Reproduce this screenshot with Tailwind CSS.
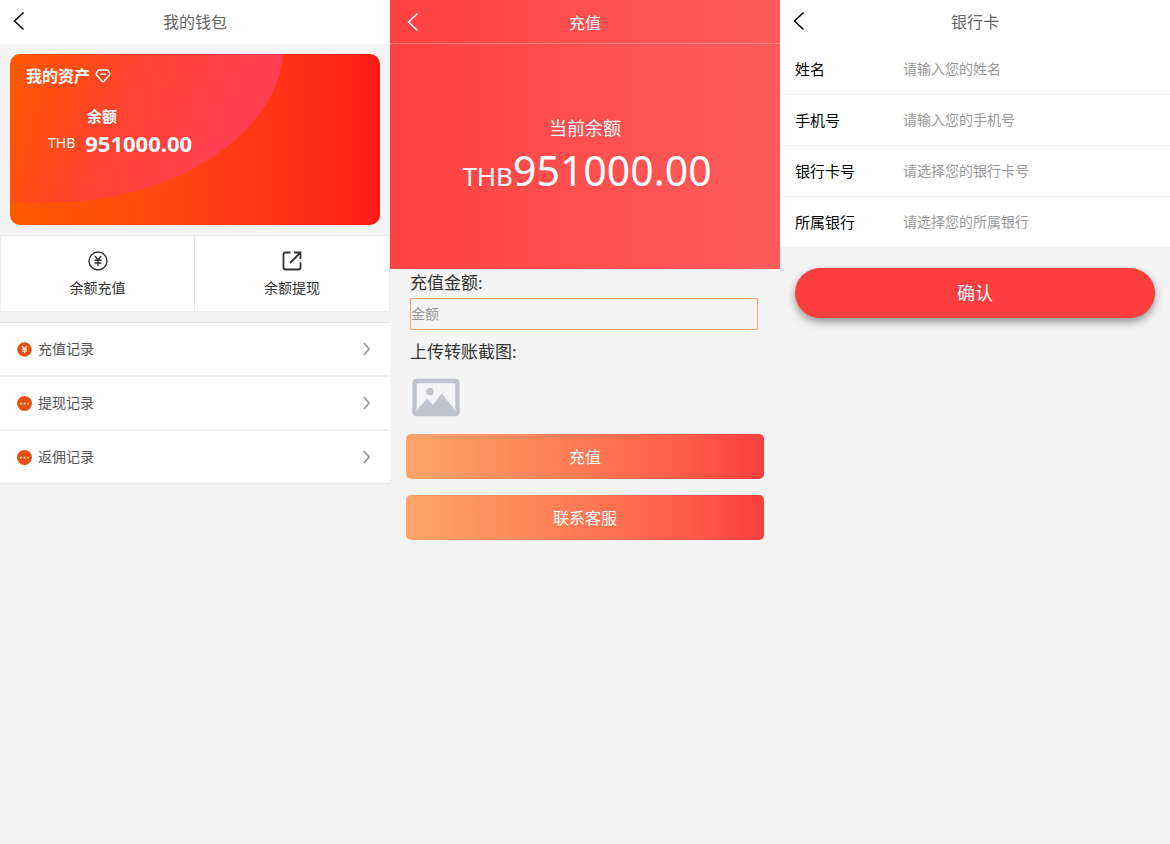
<!DOCTYPE html>
<html lang="zh-CN">

<head>
    <meta charset="UTF-8">
    <meta name="viewport" content="width=device-width, initial-scale=1.0">
    <title>我的钱包</title>
    <script src="https://cdn.jsdelivr.net/npm/@tailwindcss/browser@4"></script>
</head>

<body class="min-h-screen bg-[#f4f4f4] font-['Noto_Sans','Noto_Sans_CJK_SC',sans-serif] text-[#333]">
    <div class="grid min-h-screen grid-cols-3">

        <!-- Wallet -->
        <section>
            <header class="grid h-11 grid-cols-[40px_1fr_40px] items-center bg-white">
                <button type="button" aria-label="返回" class="flex h-10 items-center pl-3">
                    <svg class="h-5 w-3.5 text-black" viewBox="0 0 14 20" fill="none" stroke="currentColor" stroke-width="1.5">
                        <path d="M11.5 0.5L2.5 9l9 8.500" />
                    </svg>
                </button>
                <h1 class="text-center text-base text-[#666]">我的钱包</h1>
            </header>

            <div class="relative m-2.5 h-[171px] overflow-hidden rounded-[10px] bg-linear-to-r from-[#ff5a00] to-[#ff1a1a] text-white">
                <svg class="absolute top-0 left-0 h-[150px] w-[275px]" viewBox="0 0 275 150">
                    <defs>
                        <linearGradient id="arc" gradientUnits="userSpaceOnUse" x1="0" y1="20" x2="200" y2="110">
                            <stop offset="0" stop-color="#ff4a1a" stop-opacity="0.1" />
                            <stop offset="0.5" stop-color="#ff4136" stop-opacity="0.85" />
                            <stop offset="1" stop-color="#ff3f4f" />
                        </linearGradient>
                    </defs>
                    <ellipse cx="34" cy="-10" rx="240" ry="159" fill="url(#arc)" />
                </svg>
                <div class="relative px-4 pt-2.5">
                    <h2 class="flex items-center gap-[5px] text-base leading-6 font-bold">我的资产
                        <svg class="h-4 w-4" viewBox="0 0 16 16" fill="none" stroke="currentColor" stroke-width="1.5" stroke-linejoin="round" stroke-linecap="round">
                            <path d="M4 2h8q1 0 1.500 1l1.200 2.200q.4.900-.2 1.600L9 13.300q-1 1-2 0L1.500 6.800q-.6-.7-.2-1.600L2.500 3q.5-1 1.500-1z" />
                            <path d="M5.800 6.300h4.400" />
                        </svg>
                    </h2>
                    <dl class="mt-4 grid grid-cols-[39px_1fr] pl-[22px]">
                        <dt class="col-start-2 text-[15px] leading-6 font-bold">余额</dt>
                        <dd class="col-span-2 flex items-center gap-2.5 leading-[30px]">
                            <span class="text-sm leading-[30px]">THB</span>
                            <span class="text-[22px] font-bold">951000.00</span>
                        </dd>
                    </dl>
                </div>
            </div>

            <nav class="mt-2.5 grid grid-cols-2 divide-x divide-[#e8e8e8] border border-[#ececec] bg-white text-sm">
                <a href="#" class="flex h-[75px] flex-col items-center gap-1.5 pt-3.5">
                    <svg class="h-[22px] w-[22px]" viewBox="0 0 22 22" fill="none" stroke="currentColor" stroke-width="1.4">
                        <circle cx="11" cy="11" r="9" />
                        <path d="M8 6l3 4 3-4M11 10v6M7.500 10.300h7M7.500 13h7" />
                    </svg>
                    余额充值
                </a>
                <a href="#" class="flex h-[75px] flex-col items-center gap-1.5 pt-3.5">
                    <svg class="h-[22px] w-[22px]" viewBox="0 0 22 22" fill="none" stroke="currentColor" stroke-width="1.8">
                        <path d="M9.500 2.500H4.500Q2.500 2.500 2.500 4.500V17.500Q2.500 19.500 4.500 19.500H17.500Q19.500 19.500 19.500 17.500V12.500" />
                        <path d="M9 13L19 3M13 2.500h6.500V9" />
                    </svg>
                    余额提现
                </a>
            </nav>

            <ul class="mt-2.5 divide-y-2 divide-[#f1f1f1] border-y border-[#e4e4e4] bg-white text-sm text-[#555]">
                <li>
                    <a href="#" class="flex h-[52px] items-center pr-[15px] pl-4">
                        <svg class="mr-1.5 h-4 w-4" viewBox="0 0 16 16" fill="none">
                            <circle cx="8.500" cy="8.500" r="7.200" fill="#e05010" />
                            <path d="M6 4.800l2.500 3 2.500-3M8.500 7.800v4.500M6 8.100h5M6 10.100h5" stroke="#ffe9d8" stroke-width="1.200" />
                        </svg>
                        充值记录
                        <svg class="ml-auto h-4 w-4 text-[#999]" viewBox="0 0 16 16" fill="none" stroke="currentColor" stroke-width="1.8">
                            <path d="M5 2l5 6-5 6" />
                        </svg>
                    </a>
                </li>
                <li>
                    <a href="#" class="flex h-[52px] items-center pr-[15px] pl-4">
                        <svg class="mr-1.5 h-4 w-4" viewBox="0 0 16 16">
                            <circle cx="8.500" cy="8.500" r="7.500" fill="#e8500e" />
                            <path d="M4 7.800h1.600v1.600H4zM7.700 7.800h1.600v1.600H7.700zM11.400 7.800H13v1.600h-1.600z" fill="#ffe9d8" />
                        </svg>
                        提现记录
                        <svg class="ml-auto h-4 w-4 text-[#999]" viewBox="0 0 16 16" fill="none" stroke="currentColor" stroke-width="1.8">
                            <path d="M5 2l5 6-5 6" />
                        </svg>
                    </a>
                </li>
                <li>
                    <a href="#" class="flex h-[52px] items-center pr-[15px] pl-4">
                        <svg class="mr-1.5 h-4 w-4" viewBox="0 0 16 16">
                            <circle cx="8.500" cy="8.500" r="7.500" fill="#e8500e" />
                            <path d="M4 7.800h1.600v1.600H4zM7.700 7.800h1.600v1.600H7.700zM11.400 7.800H13v1.600h-1.600z" fill="#ffe9d8" />
                        </svg>
                        返佣记录
                        <svg class="ml-auto h-4 w-4 text-[#999]" viewBox="0 0 16 16" fill="none" stroke="currentColor" stroke-width="1.8">
                            <path d="M5 2l5 6-5 6" />
                        </svg>
                    </a>
                </li>
            </ul>
        </section>

        <!-- Recharge -->
        <section>
            <div class="bg-linear-to-r from-[#ff4141] to-[#ff5b5b] text-white">
                <header class="grid h-11 grid-cols-[40px_1fr_40px] items-center border-b border-white/30">
                    <button type="button" aria-label="返回" class="flex h-10 items-center pl-4">
                        <svg class="h-5 w-3.5" viewBox="0 0 14 20" fill="none" stroke="currentColor" stroke-width="1.5">
                            <path d="M11.500 1.500L2.500 10l9 8.500" />
                        </svg>
                    </button>
                    <h1 class="pt-0.5 text-center text-base">充值</h1>
                </header>
                <div class="h-[225px] pt-[70px] text-center">
                    <p class="text-lg leading-7">当前余额</p>
                    <p class="pl-1 text-[41px] leading-[56px]"><span class="text-[26px]">THB</span>951000.00</p>
                </div>
            </div>

            <form class="px-4">
                <div class="px-1 text-[17px]">
                    <label for="amount" class="block leading-7">充值金额:</label>
                    <input id="amount" type="text" placeholder="金额"
                        class="mt-px block h-8 w-[calc(100%-2px)] border border-[#f0a878] pb-0.5 text-sm placeholder:text-[#999] focus:outline-none">
                    <label for="voucher" class="block pt-2 leading-7">上传转账截图:
                        <svg class="mt-2 h-12 w-[52px] text-[#c0c4cc]" viewBox="0 0 52 48" fill="none">
                            <rect x="4.500" y="7" width="43" height="33" rx="2" stroke="currentColor" stroke-width="4.500" />
                            <circle cx="20" cy="17.500" r="3.800" fill="currentColor" />
                            <path d="M7 36l10-11.500 6 6.500 8.500-11.500L45 36v4H7z" fill="currentColor" />
                        </svg>
                    </label>
                    <input id="voucher" type="file" class="sr-only">
                </div>
                <button type="button" class="mt-3 block h-[45px] w-full rounded-[5px] bg-linear-to-r from-[#ffa569] to-[#fb3e3e] text-base text-white">充值</button>
                <button type="button" class="mt-4 block h-[45px] w-full rounded-[5px] bg-linear-to-r from-[#ffa569] to-[#fb3e3e] text-base text-white">联系客服</button>
            </form>
        </section>

        <!-- Bank card -->
        <section>
            <header class="grid h-11 grid-cols-[40px_1fr_40px] items-center bg-white">
                <button type="button" aria-label="返回" class="flex h-10 items-center pl-3">
                    <svg class="h-5 w-3.5 text-black" viewBox="0 0 14 20" fill="none" stroke="currentColor" stroke-width="1.5">
                        <path d="M11.500 0.500L2.500 9l9 8.500" />
                    </svg>
                </button>
                <h1 class="text-center text-base text-[#666]">银行卡</h1>
            </header>
            <form>
                <div class="divide-y divide-[#f4f4f4] bg-white text-[15px] text-black">
                    <div class="flex h-[51px] items-center px-[15px]">
                        <label for="name" class="w-[108px]">姓名</label>
                        <input id="name" type="text" placeholder="请输入您的姓名" class="min-w-0 flex-1 text-sm placeholder:text-[#999] focus:outline-none">
                    </div>
                    <div class="flex h-[51px] items-center px-[15px]">
                        <label for="phone" class="w-[108px]">手机号</label>
                        <input id="phone" type="tel" placeholder="请输入您的手机号" class="min-w-0 flex-1 text-sm placeholder:text-[#999] focus:outline-none">
                    </div>
                    <div class="flex h-[51px] items-center px-[15px]">
                        <label for="card" class="w-[108px]">银行卡号</label>
                        <input id="card" type="text" placeholder="请选择您的银行卡号" class="min-w-0 flex-1 text-sm placeholder:text-[#999] focus:outline-none">
                    </div>
                    <div class="flex h-[50px] items-center px-[15px]">
                        <label for="bank" class="w-[108px]">所属银行</label>
                        <input id="bank" type="text" placeholder="请选择您的所属银行" class="min-w-0 flex-1 text-sm placeholder:text-[#999] focus:outline-none">
                    </div>
                </div>
                <div class="px-[15px] pt-[21px]">
                    <button type="button" class="block h-[50px] w-full rounded-full bg-[#fb3e3e] text-lg text-white shadow-[0_4px_8px_rgba(0,0,0,0.4)]">确认</button>
                </div>
            </form>
        </section>
    </div>
</body>

</html>
